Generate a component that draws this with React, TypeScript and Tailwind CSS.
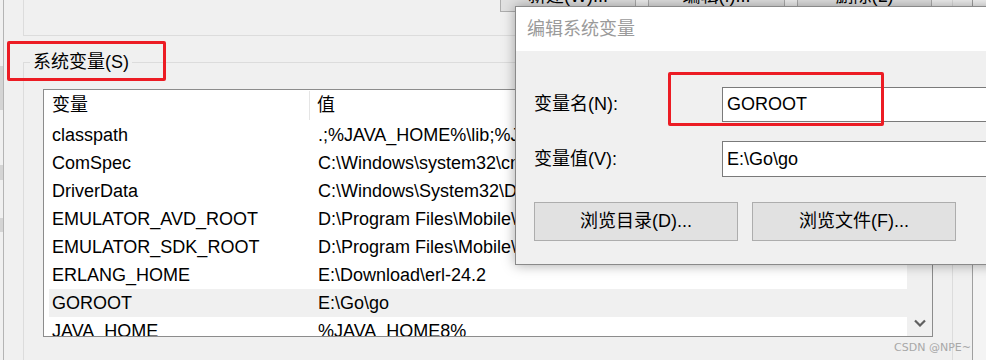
import React from "react";

const rows: [string, string][] = [
  ["classpath", ".;%JAVA_HOME%\\lib;%JAVA_HOME%\\lib\\tools.jar"],
  ["ComSpec", "C:\\Windows\\system32\\cmd.exe"],
  ["DriverData", "C:\\Windows\\System32\\Drivers\\DriverData"],
  ["EMULATOR_AVD_ROOT", "D:\\Program Files\\Mobile\\avd"],
  ["EMULATOR_SDK_ROOT", "D:\\Program Files\\Mobile\\sdk"],
  ["ERLANG_HOME", "E:\\Download\\erl-24.2"],
  ["GOROOT", "E:\\Go\\go"],
  ["JAVA_HOME", "%JAVA_HOME8%"],
];

const LeftStrip = () => (
  <div className="w-[4px] h-full border-r border-[#b4b4b4] flex flex-col">
    <div className="h-[66px]" />
    <div className="h-[44px] bg-[#d4d4d4]" />
    <div className="h-[55px]" />
    <div className="h-[15px] bg-[#d4d4d4]" />
    <div className="h-[38px]" />
    <div className="h-[14px] bg-[#d4d4d4]" />
  </div>
);

const ListBox = () => (
  <div className="ml-[19px] mt-[26px] w-[890px] h-[248px] border border-[#8c8c8c] bg-white flex overflow-hidden">
    <div className="flex-1 pl-[5px] flex flex-col">
      {/* header */}
      <div className="h-[31px] shrink-0 flex items-center">
        <div className="w-[261px] h-[29px] border-r border-[#e5e5e5] pl-[3px] flex items-center">变量</div>
        <div className="pl-[7px]">值</div>
      </div>
      {rows.map(([name, value]) => (
        <div
          key={name}
          className={`h-[28px] shrink-0 flex items-center whitespace-nowrap ${
            name === "GOROOT" ? "bg-[#f0f0f0]" : ""
          }`}
        >
          <div className="w-[266px] shrink-0 pl-[3px]">{name}</div>
          <div className="pl-[3px]">{value}</div>
        </div>
      ))}
    </div>
    {/* scrollbar */}
    <div className="w-[25px] shrink-0 bg-[#f0f0f0] flex flex-col justify-end items-center pb-[9px]">
      <svg width="12" height="8" viewBox="0 0 12 8">
        <path d="M1 1.5 L6 6.5 L11 1.5" fill="none" stroke="#606060" strokeWidth="2.2" />
      </svg>
    </div>
  </div>
);

const EditDialog = () => (
  <div className="absolute left-[515px] top-[6px] w-[490px] h-[259px] border border-[#8a8a8a] bg-[#f0f0f0] shadow-[0_0_12px_rgba(0,0,0,0.35)] flex flex-col">
    <div className="h-[44px] bg-white pl-[11px] flex items-center text-[#9a9a9a]">编辑系统变量</div>
    <div className="pl-[18px] pt-[36px] flex flex-col">
      <div className="flex items-center">
        <div className="w-[188px] shrink-0">变量名(N):</div>
        <div className="w-[300px] shrink-0 h-[35px] border border-[#7a7a7a] bg-white pl-[4px] flex items-center">GOROOT</div>
      </div>
      <div className="flex items-center mt-[19px]">
        <div className="w-[188px] shrink-0">变量值(V):</div>
        <div className="w-[300px] shrink-0 h-[36px] border border-[#7a7a7a] bg-white pl-[4px] flex items-center">E:\Go\go</div>
      </div>
      <div className="flex gap-[14px] mt-[25px]">
        <button className="w-[204px] shrink-0 h-[39px] bg-[#e1e1e1] border border-[#adadad]">浏览目录(D)...</button>
        <button className="w-[204px] shrink-0 h-[39px] bg-[#e1e1e1] border border-[#adadad]">浏览文件(F)...</button>
      </div>
    </div>
  </div>
);

export default function App() {
  return (
    <div className="relative w-[986px] h-[360px] overflow-hidden bg-[#f0f0f0] text-[18px] text-black font-['Liberation_Sans','Noto_Sans_CJK_SC',sans-serif]">
      <div className="flex h-full">
        <LeftStrip />
        <div className="w-[969px] h-full border-r border-[#a0a0a0] pl-[19px] flex flex-col">
          {/* upper group box */}
          <div className="w-[930px] h-[36px] shrink-0 border-l border-b border-r border-[#dcdcdc] flex justify-end gap-[12px] pr-[20px]">
            <button className="w-[136px] h-[30px] -mt-[18px] pb-[12px] bg-[#e1e1e1] border border-[#adadad]">新建(W)...</button>
            <button className="w-[137px] h-[30px] -mt-[18px] pb-[12px] bg-[#e1e1e1] border border-[#adadad]">编辑(I)...</button>
            <button className="w-[135px] h-[30px] -mt-[18px] pb-[12px] bg-[#e1e1e1] border border-[#adadad]">删除(L)</button>
          </div>
          {/* lower group box */}
          <div className="relative w-[930px] flex-1 mt-[26px] border-t border-l border-r border-[#dcdcdc]">
            <div className="absolute -top-[14px] left-[6px] px-[3px] bg-[#f0f0f0] leading-[26px]">系统变量(S)</div>
            <ListBox />
          </div>
        </div>
        <div className="flex-1 bg-[#f4f4f4]" />
      </div>

      <EditDialog />

      {/* annotation boxes */}
      <div className="absolute left-[7px] top-[41px] w-[159px] h-[40px] border-[3px] border-[#ec1c24] rounded-[2px]" />
      <div className="absolute left-[668px] top-[72px] w-[216px] h-[54px] border-[3px] border-[#ec1c24] rounded-[2px]" />

      <div className="absolute right-[15px] bottom-[6px] text-[11px] leading-[12px] text-[#a8a8a8] font-['DejaVu_Sans',sans-serif]">
        CSDN @NPE~
      </div>
    </div>
  );
}
